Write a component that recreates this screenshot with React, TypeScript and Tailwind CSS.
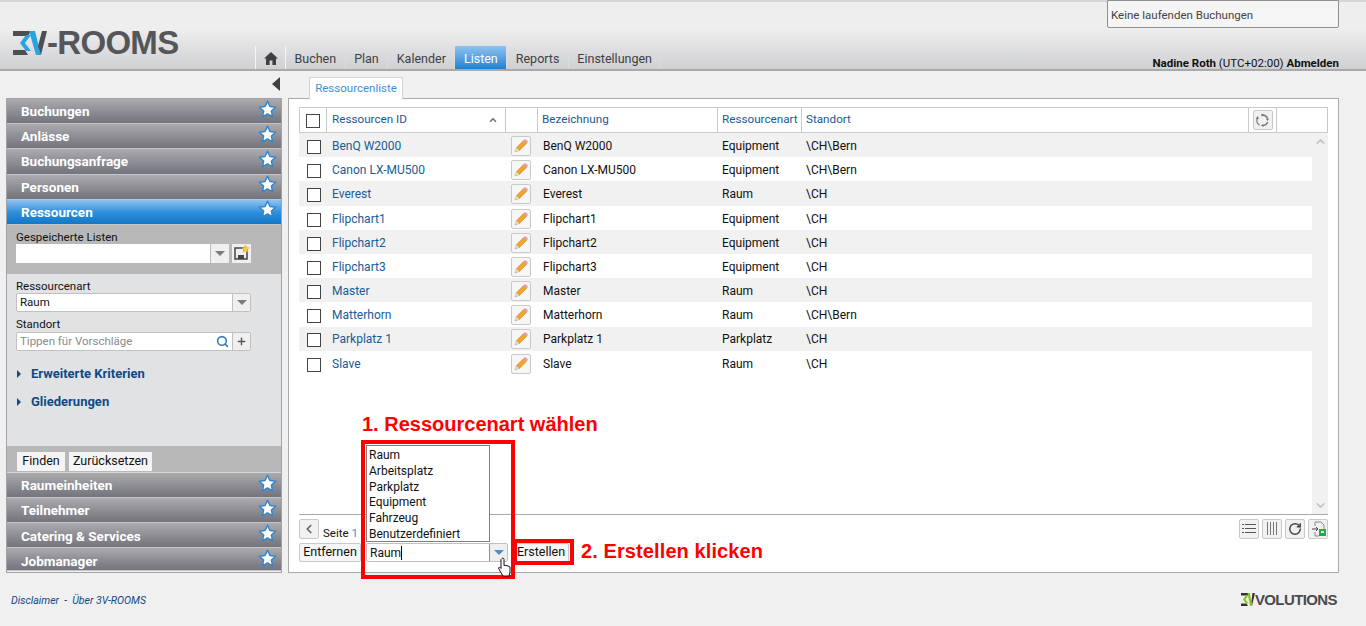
import { ChevronUp, ChevronDown, ChevronLeft, Plus, Search, RotateCw } from "lucide-react";

const navTop = ["Buchungen", "Anlässe", "Buchungsanfrage", "Personen"];
const navBottom = ["Raumeinheiten", "Teilnehmer", "Catering & Services", "Jobmanager"];
const tabs = ["Buchen", "Plan", "Kalender", "Listen", "Reports", "Einstellungen"];
const options = ["Raum", "Arbeitsplatz", "Parkplatz", "Equipment", "Fahrzeug", "Benutzerdefiniert"];

const rows = [
  ["BenQ W2000", "Equipment", "\\CH\\Bern"],
  ["Canon LX-MU500", "Equipment", "\\CH\\Bern"],
  ["Everest", "Raum", "\\CH"],
  ["Flipchart1", "Equipment", "\\CH"],
  ["Flipchart2", "Equipment", "\\CH"],
  ["Flipchart3", "Equipment", "\\CH"],
  ["Master", "Raum", "\\CH"],
  ["Matterhorn", "Raum", "\\CH\\Bern"],
  ["Parkplatz 1", "Parkplatz", "\\CH"],
  ["Slave", "Raum", "\\CH"],
];

const Star = () => (
  <svg width="19" height="19" viewBox="0 0 18 18" className="shrink-0 -mt-[4px]">
    <path d="M9 1.2l2.3 5 5.4.6-4 3.7 1.1 5.4L9 13.2l-4.8 2.7 1.1-5.4-4-3.7 5.4-.6z" fill="#fff" stroke="#2f86cf" strokeWidth="1.4" strokeLinejoin="round" />
  </svg>
);

const NavItem = ({ label, active, h }: { label: string; active?: boolean; h: string }) => (
  <div
    className={`flex items-center justify-between shrink-0 pl-[14px] pr-[4px] border-b border-[#c4c5c8] text-[13.5px] font-bold text-white ${h} ${
      active ? "bg-gradient-to-b from-[#8cc3f3] via-[#2f8fdb] to-[#0f78c8]" : "bg-gradient-to-b from-[#ababaf] to-[#73747c]"
    }`}
  >
    <span>{label}</span>
    <Star />
  </div>
);

const Pencil = () => (
  <svg width="16" height="16" viewBox="0 0 16 16">
    <path d="M3.500 9.500L10.500 2.500l3 3-7 7z" fill="#f2a22e" stroke="#d98a1f" strokeWidth="0.5" />
    <path d="M10.500 2.500l1-1c.5-.5 1-.5 1.500 0l1.500 1.500c.5.500.5 1 0 1.500l-1 1z" fill="#e79ab0" />
    <path d="M3.500 9.500l3 3-4.500 1.500z" fill="#f3dfbd" stroke="#a08a66" strokeWidth="0.4" />
  </svg>
);

const Arrow = ({ color = "#7b7b7b" }: { color?: string }) => (
  <svg width="10" height="5" viewBox="0 0 10 5">
    <path d="M0 0h10L5 5z" fill={color} />
  </svg>
);

const ToolBtn = ({ children }: { children: React.ReactNode }) => (
  <div className="w-[20px] h-[20px] flex items-center justify-center rounded-[2px] border border-[#c9c9c9] bg-[#f1f1f1]">{children}</div>
);

export default function App() {
  return (
    <div className="relative w-[1366px] h-[626px] overflow-hidden bg-[#f0f0f0] text-[12px] text-[#111] font-['Roboto',sans-serif]">
      {/* header */}
      <header className="relative flex items-end h-[71px] border-t-[2px] border-t-[#d6d6d8] border-b-[2px] border-b-[#a9a9ad] bg-gradient-to-b from-[#eeeeef] from-40% to-[#cfd0d2]">
        <div className="flex items-center w-[255px] h-[69px] pl-[12px] pt-[16px] text-[#55565a]">
          <svg width="35" height="24" viewBox="0 0 35 24" className="shrink-0">
            <path d="M1 0h18l-3 5H1zM1 24h15l-3-5H1z" fill="#4e4f53" />
            <path d="M14 4h5l-6 8 6 8h-5L8 12z" fill="#2aa3e2" />
            <path d="M17 0h6l6 24h-5z" fill="#2aa3e2" />
            <path d="M30 0h5l-6 24-3-9z" fill="#4e4f53" />
          </svg>
          <span className="text-[33px] leading-none font-bold tracking-[-0.7px] font-['Liberation_Sans',sans-serif]">-ROOMS</span>
        </div>
        <nav className="flex h-[23px] text-[12.5px] text-[#3f4045]">
          <div className="flex items-center justify-center w-[31px] pt-[2px] border-x border-x-[#f5f5f5]">
            <svg width="14" height="13" viewBox="0 0 14 13"><path d="M7 0L0 6.5h2V13h3.6V8.5h2.8V13H12V6.500h2z" fill="#404040" /></svg>
          </div>
          {tabs.map((t) => (
            <div
              key={t}
              className={`flex items-center px-[8.5px] pt-[3px] border-r border-r-[#dcdcde] ${
                t === "Listen" ? "text-white bg-gradient-to-b from-[#8cc3f3] to-[#1a80d0]" : ""
              }`}
            >
              {t}
            </div>
          ))}
        </nav>
        <div className="absolute right-[27px] top-[-2px] flex items-center w-[232px] h-[28px] pl-[3px] pt-[3px] border border-[#8e8e8e] rounded-b-[2px] bg-[#f5f5f5] text-[11.5px] text-[#444]">
          Keine laufenden Buchungen
        </div>
        <div className="absolute right-[27px] bottom-[-1px] text-[11.5px] leading-[14px] font-bold">
          Nadine Roth <span className="font-normal">(UTC+02:00)</span> Abmelden
        </div>
      </header>

      {/* tab strip */}
      <div className="relative flex items-end h-[27px] pl-[309px]">
        <div className="absolute left-[272px] top-[6px] w-0 h-0 border-y-[7px] border-y-transparent border-r-[8px] border-r-[#404040]" />
        <div className="relative z-10 -mb-px flex items-center justify-center w-[94px] h-[22px] border-x border-t border-[#d5d5d5] bg-white text-[11.5px] text-[#3f8fdc]">Ressourcenliste</div>
      </div>

      <div className="flex gap-[6px] pl-[6px]">
        {/* sidebar */}
        <aside className="flex flex-col w-[276px] h-[475px] border border-[#a2a3a8]">
          {navTop.map((n) => (
            <NavItem key={n} label={n} h="h-[25.2px]" />
          ))}
          <NavItem label="Ressourcen" active h="h-[25px]" />
          <div className="flex flex-col shrink-0 h-[49.5px] pl-[9px] pt-[6px] bg-[#b8b8b8]">
            <div className="text-[11.5px] leading-[13px]">Gespeicherte Listen</div>
            <div className="flex gap-[3px]">
              <div className="flex">
                <div className="w-[194px] h-[19px] bg-white" />
                <div className="flex items-center justify-center w-[19px] h-[19px] border-l border-[#bbb] bg-[#efefef]"><Arrow /></div>
              </div>
              <div className="flex items-center justify-center w-[19px] h-[19px] bg-[#efefef]">
                <svg width="16" height="16" viewBox="0 0 16 16">
                  <path d="M1 3h9v2h3v9H1z" fill="none" stroke="#444" strokeWidth="1.5" />
                  <path d="M4 10h6v4H4z" fill="#444" />
                  <path d="M11.500 0l1.200 2.400 2.600.4-1.900 1.800.5 2.600-2.400-1.300-2.400 1.300.5-2.600L7.700 2.800l2.600-.4z" fill="#f7cf3c" stroke="#d3a21c" strokeWidth="0.4" />
                </svg>
              </div>
            </div>
          </div>
          <div className="flex flex-col shrink-0 h-[171.5px] pl-[9px] pt-[6px] bg-[#e1e2e4]">
            <div className="text-[11.5px] leading-[13px]">Ressourcenart</div>
            <div className="flex w-[235px] h-[19px] border border-[#c0c0c0] rounded-[2px] bg-white">
              <div className="flex-1 pl-[3px] text-[11.5px] leading-[17px]">Raum</div>
              <div className="flex items-center justify-center w-[18px] border-l border-[#c0c0c0] bg-[#efefef]"><Arrow /></div>
            </div>
            <div className="text-[11.5px] leading-[13px] mt-[6px]">Standort</div>
            <div className="flex w-[235px] h-[19px] mt-[1px] border border-[#c0c0c0] rounded-[2px] bg-white">
              <div className="flex-1 flex items-center justify-between pl-[3px] pr-[3px] text-[11.5px] leading-[17px] text-[#8b8b8b]">
                Tippen für Vorschläge
                <Search size={13} strokeWidth={3} className="text-[#2f7fc0]" />
              </div>
              <div className="flex items-center justify-center w-[18px] border-l border-[#c0c0c0] bg-[#efefef]">
                <Plus size={11} strokeWidth={3} className="text-[#555]" />
              </div>
            </div>
            <div className="flex items-center gap-[10px] mt-[13px] pl-[1px] text-[13px] font-bold text-[#0f4a85]">
              <span className="w-0 h-0 border-y-[4px] border-y-transparent border-l-[4px] border-l-[#0f4a85]" />
              Erweiterte Kriterien
            </div>
            <div className="flex items-center gap-[10px] mt-[8px] pl-[1px] text-[13px] font-bold text-[#0f4a85]">
              <span className="w-0 h-0 border-y-[4px] border-y-transparent border-l-[4px] border-l-[#0f4a85]" />
              Gliederungen
            </div>
          </div>
          <div className="flex items-center shrink-0 gap-[4px] h-[27px] pl-[10px] pt-[5px] bg-[#b8b8b8] border-b border-[#d5d5d5]">
            <div className="flex items-center justify-center w-[48px] h-[19px] bg-[#f4f4f4] text-[12.5px]">Finden</div>
            <div className="flex items-center justify-center w-[83px] h-[19px] bg-[#f4f4f4] text-[12.5px]">Zurücksetzen</div>
          </div>
          {navBottom.map((n, i) => (
            <NavItem key={n} label={n} h={i === 3 ? "h-[23px] pt-[3px]" : "h-[25.2px] pt-[1px]"} />
          ))}
        </aside>

        {/* main panel */}
        <main className="flex flex-col w-[1051px] h-[475px] pt-[8px] px-[10px] border border-[#a9a9ad] bg-white">
          <div className="flex items-center shrink-0 h-[26px] border border-[#c9c9cf] text-[11.7px] text-[#1a5a96]">
            <div className="flex items-center justify-center w-[27px] h-full border-r border-[#c9c9cf]">
              <span className="w-[14px] h-[14px] mt-[2px] border border-[#444] bg-white" />
            </div>
            <div className="flex items-center justify-between w-[179px] h-full pl-[5px] pr-[7px] border-r border-[#c9c9cf]">
              Ressourcen ID
              <ChevronUp size={10} strokeWidth={4} className="text-[#777]" />
            </div>
            <div className="w-[32px] h-full border-r border-[#c9c9cf]" />
            <div className="flex items-center w-[180px] h-full pl-[4px] border-r border-[#c9c9cf]">Bezeichnung</div>
            <div className="flex items-center w-[84px] h-full pl-[4px] border-r border-[#c9c9cf]">Ressourcenart</div>
            <div className="flex items-center flex-1 h-full pl-[4px] border-r border-[#c9c9cf]">Standort</div>
            <div className="flex items-center justify-center w-[28px] h-full border-r border-[#c9c9cf]">
              <div className="flex items-center justify-center w-[20px] h-[20px] border border-[#c9c9c9] rounded-[2px] bg-[#f1f1f1]">
                <svg width="15" height="15" viewBox="0 0 15 15" fill="none">
                  <path d="M7.500 2a5.500 5.500 0 0 1 5 3.200M12.800 9a5.500 5.500 0 0 1-4.500 3.400M4.500 12.200A5.500 5.500 0 0 1 2.500 5" stroke="#777" strokeWidth="1.300" />
                  <path d="M6.500 0.500l2.500 1.500-2.500 1.500zM11 5.500l3 0-1.500 2.500zM6 12.500l2.500-1.500v3zM1 6l3-.5-1.500-2.500z" fill="#666" />
                </svg>
              </div>
            </div>
            <div className="w-[50px] h-full" />
          </div>

          <div className="flex flex-1 min-h-0">
            <div className="flex-1">
              {rows.map((r, i) => (
                <div key={r[0]} className={`flex items-center h-[24.2px] pt-[1.8px] ${i % 2 === 0 ? "bg-[#f1f1f1]" : "bg-white"}`}>
                  <div className="flex items-center justify-center w-[29px]">
                    <span className="w-[14px] h-[14px] mt-[2px] border border-[#444] bg-white" />
                  </div>
                  <div className="w-[183px] pl-[4px] text-[#1a5a96]">{r[0]}</div>
                  <div className="w-[32px] flex items-center">
                    <div className="flex items-center justify-center w-[20px] h-[20px] border border-[#c9c9c9] rounded-[2px] bg-[#f6f6f6]">
                      <Pencil />
                    </div>
                  </div>
                  <div className="w-[179px]">{r[0]}</div>
                  <div className="w-[84px]">{r[1]}</div>
                  <div>{r[2]}</div>
                </div>
              ))}
            </div>
            <div className="flex flex-col items-center justify-between w-[16px] py-[2px] bg-[#f1f1f1]">
              <ChevronUp size={13} strokeWidth={3} className="text-[#c4c4c4]" />
              <ChevronDown size={13} strokeWidth={3} className="text-[#c4c4c4]" />
            </div>
          </div>

          {/* bottom bar */}
          <div className="flex flex-col shrink-0 h-[58px] border-t border-[#a9a9ad]">
            <div className="flex items-center justify-between shrink-0 h-[27px]">
              <div className="flex items-center gap-[4px]">
                <div className="flex items-center justify-center w-[20px] h-[20px] border border-[#c9c9c9] rounded-[2px] bg-[#f1f1f1]">
                  <ChevronLeft size={14} strokeWidth={3} className="text-[#666]" />
                </div>
                <span className="text-[11.5px] mt-[10px]">Seite <span className="text-[#3f8fdc]">1</span> |</span>
              </div>
              <div className="flex gap-[3px]">
                <ToolBtn>
                  <svg width="14" height="11" viewBox="0 0 14 11"><path d="M0 1h2v1H0zM3 1h11v1H3zM0 5h2v1H0zM3 5h11v1H3zM0 9h2v1H0zM3 9h11v1H3z" fill="#555" /></svg>
                </ToolBtn>
                <ToolBtn>
                  <svg width="12" height="13" viewBox="0 0 12 13"><path d="M1 0h1v13H1zM4 0h1v13H4zM7 0h1v13H7zM10 0h1v13h-1z" fill="#777" /></svg>
                </ToolBtn>
                <ToolBtn>
                  <RotateCw size={14} strokeWidth={2.5} className="text-[#444]" />
                </ToolBtn>
                <ToolBtn>
                  <svg width="15" height="16" viewBox="0 0 15 16">
                    <path d="M4 1h6l3 3v4M4 1v4M4 11v4h4" fill="none" stroke="#888" />
                    <path d="M1 8h6M5 6l2 2-2 2" fill="none" stroke="#444" />
                    <path d="M8 8h7v7H8z" fill="#2ca44e" />
                    <path d="M10 10h3v2h-3z" fill="#d8f0df" />
                  </svg>
                </ToolBtn>
              </div>
            </div>
            <div className="flex items-center gap-[5px] h-[19px] mt-[1px]">
              <div className="flex items-center justify-center w-[62px] h-[19px] border border-[#c9c9c9] rounded-[2px] bg-[#f6f6f6] text-[12.5px]">Entfernen</div>
              <div className="flex w-[142px] h-[19px] border border-[#c0c0c0] rounded-[2px] bg-white">
                <div className="flex items-center flex-1 pl-[3px] text-[12px]">
                  Raum<span className="w-px h-[14px] bg-black" />
                </div>
                <div className="flex items-center justify-center w-[18px] border-l border-[#8e8e8e] bg-[#efefef]"><Arrow color="#4a90d0" /></div>
              </div>
              <div className="flex items-center justify-center w-[56px] h-[19px] border border-[#c9c9c9] rounded-[2px] bg-[#f6f6f6] text-[12.5px]">Erstellen</div>
            </div>
          </div>
        </main>
      </div>

      {/* footer */}
      <footer className="flex items-center justify-between h-[53px] pl-[11px] pr-[29px]">
        <span className="pt-[2px] text-[10.5px] italic text-[#0f4a85]">Disclaimer &nbsp;-&nbsp; Über 3V-ROOMS</span>
        <div className="flex items-center text-[#4a4b4f]">
          <svg width="14" height="13" viewBox="0 0 14 13" className="shrink-0">
            <path d="M0 0h8L6.500 2.500H0zM0 13h7L5.500 10.500H0z" fill="#333" />
            <path d="M5 2h2.500L4.500 6.500l3 4H5L2 6.500z" fill="#8cc21f" />
            <path d="M6.500 0h2.500l2 13H9z" fill="#8cc21f" />
            <path d="M11.500 0H14l-3 13-.5-5z" fill="#333" />
          </svg>
          <span className="text-[15px] leading-none font-bold tracking-[-0.6px] font-['Liberation_Sans',sans-serif]">VOLUTIONS</span>
        </div>
      </footer>

      {/* combo dropdown and screenshot annotations */}
      <div className="absolute left-[366px] top-[445px] w-[124px] h-[97px] pt-[2px] pl-[2px] border border-[#7f7f7f] bg-white text-[12px]">
        {options.map((o) => (
          <div key={o} className="h-[15.8px] leading-[15.8px]">{o}</div>
        ))}
      </div>
      <div className="absolute left-[361px] top-[440px] w-[154px] h-[139px] border-[4px] border-[#ff0000]" />
      <div className="absolute left-[513px] top-[539px] w-[61px] h-[26px] border-[4px] border-[#ff0000]" />
      <div className="absolute left-[362px] top-[412px] text-[20px] leading-[24px] font-bold text-[#ff0000] font-['Liberation_Sans',sans-serif]">1. Ressourcenart wählen</div>
      <div className="absolute left-[581px] top-[539px] text-[20px] leading-[24px] font-bold tracking-[0.1px] text-[#ff0000] font-['Liberation_Sans',sans-serif]">2. Erstellen klicken</div>
      <svg width="14" height="21" viewBox="0 0 14 21" className="absolute left-[498px] top-[557px]">
        <path d="M4 1.500c1-.8 2 0 2 1v6l1-.3 1 .3 1 .2 1 .3 2 1v5l-1 4H5l-3-5-1.500-3 1-1 1.500 1.500V2.500z" fill="#fff" stroke="#111" strokeWidth="1" strokeLinejoin="round" />
      </svg>
    </div>
  );
}
